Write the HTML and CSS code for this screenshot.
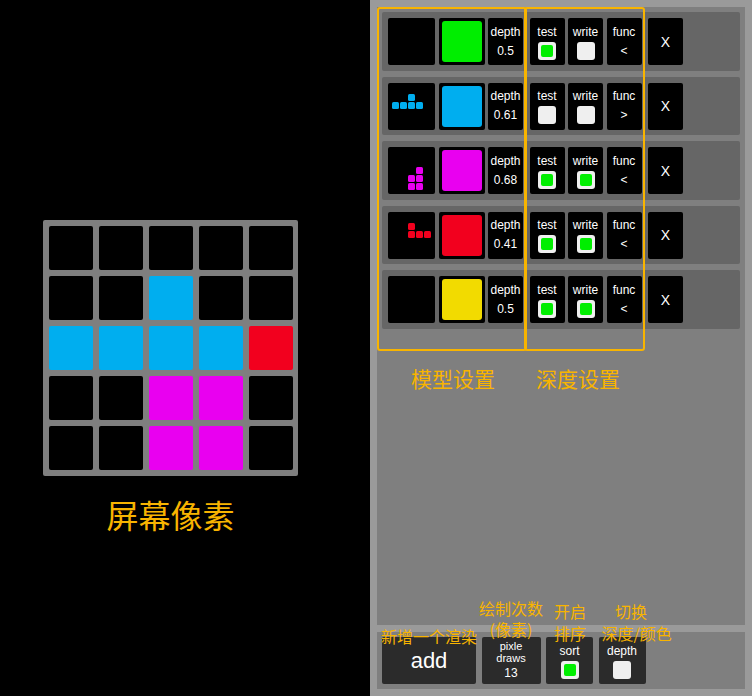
FILE: index.html
```html
<!DOCTYPE html>
<html lang="zh">
<head>
<meta charset="utf-8">
<title>Depth test demo</title>
<link rel="stylesheet" href="styles.css">
</head>
<body>
<div class="page">
  <section class="left">
    <div class="screen">
      <i class="px"></i><i class="px"></i><i class="px"></i><i class="px"></i><i class="px"></i>
      <i class="px"></i><i class="px"></i><i class="px cy"></i><i class="px"></i><i class="px"></i>
      <i class="px cy"></i><i class="px cy"></i><i class="px cy"></i><i class="px cy"></i><i class="px rd"></i>
      <i class="px"></i><i class="px"></i><i class="px mg"></i><i class="px mg"></i><i class="px"></i>
      <i class="px"></i><i class="px"></i><i class="px mg"></i><i class="px mg"></i><i class="px"></i>
    </div>
    <div class="screen-label">屏幕像素</div>
  </section>

  <section class="panel">
    <div class="list">
      <div class="row">
        <div class="cell icon"></div>
        <div class="cell swatch"><div class="fill green"></div></div>
        <div class="cell txt"><span>depth</span><span class="val">0.5</span></div>
        <div class="cell txt sep"><span>test</span><span class="chk on"></span></div>
        <div class="cell txt"><span>write</span><span class="chk"></span></div>
        <div class="cell txt"><span>func</span><span class="val">&lt;</span></div>
        <div class="cell del sep">X</div>
      </div>

      <div class="row">
        <div class="cell icon ic-cy">
          <i></i><i></i><i></i><i></i><i></i>
          <i></i><i></i><i class="on"></i><i></i><i></i>
          <i class="on"></i><i class="on"></i><i class="on"></i><i class="on"></i><i></i>
        </div>
        <div class="cell swatch"><div class="fill cyan"></div></div>
        <div class="cell txt"><span>depth</span><span class="val">0.61</span></div>
        <div class="cell txt sep"><span>test</span><span class="chk"></span></div>
        <div class="cell txt"><span>write</span><span class="chk"></span></div>
        <div class="cell txt"><span>func</span><span class="val">&gt;</span></div>
        <div class="cell del sep">X</div>
      </div>

      <div class="row">
        <div class="cell icon ic-mg">
          <i></i><i></i><i></i><i></i><i></i>
          <i></i><i></i><i></i><i></i><i></i>
          <i></i><i></i><i></i><i class="on"></i><i></i>
          <i></i><i></i><i class="on"></i><i class="on"></i><i></i>
          <i></i><i></i><i class="on"></i><i class="on"></i><i></i>
        </div>
        <div class="cell swatch"><div class="fill magenta"></div></div>
        <div class="cell txt"><span>depth</span><span class="val">0.68</span></div>
        <div class="cell txt sep"><span>test</span><span class="chk on"></span></div>
        <div class="cell txt"><span>write</span><span class="chk on"></span></div>
        <div class="cell txt"><span>func</span><span class="val">&lt;</span></div>
        <div class="cell del sep">X</div>
      </div>

      <div class="row">
        <div class="cell icon ic-rd">
          <i></i><i></i><i></i><i></i><i></i>
          <i></i><i></i><i class="on"></i><i></i><i></i>
          <i></i><i></i><i class="on"></i><i class="on"></i><i class="on"></i>
        </div>
        <div class="cell swatch"><div class="fill red"></div></div>
        <div class="cell txt"><span>depth</span><span class="val">0.41</span></div>
        <div class="cell txt sep"><span>test</span><span class="chk on"></span></div>
        <div class="cell txt"><span>write</span><span class="chk on"></span></div>
        <div class="cell txt"><span>func</span><span class="val">&lt;</span></div>
        <div class="cell del sep">X</div>
      </div>

      <div class="row">
        <div class="cell icon"></div>
        <div class="cell swatch"><div class="fill yellow"></div></div>
        <div class="cell txt"><span>depth</span><span class="val">0.5</span></div>
        <div class="cell txt sep"><span>test</span><span class="chk on"></span></div>
        <div class="cell txt"><span>write</span><span class="chk on"></span></div>
        <div class="cell txt"><span>func</span><span class="val">&lt;</span></div>
        <div class="cell del sep">X</div>
      </div>
    </div>

    <div class="toolbar">
      <div class="tool add">add</div>
      <div class="tool draws"><span>pixle</span><span>draws</span><span class="count">13</span></div>
      <div class="tool txt wide"><span>sort</span><span class="chk on"></span></div>
      <div class="tool txt wide"><span>depth</span><span class="chk"></span></div>
    </div>
  </section>
</div>

<div class="box box-model"></div>
<div class="box box-depth"></div>
<div class="note n-model">模型设置</div>
<div class="note n-depth">深度设置</div>
<div class="note n-add">新增一个渲染</div>
<div class="note n-draws"><div>绘制次数</div><div>(像素)</div></div>
<div class="note n-sort"><div>开启</div><div>排序</div></div>
<div class="note n-switch"><div class="shift">切换</div><div>深度/颜色</div></div>
</body>
</html>
```

FILE: styles.css
```css
* { box-sizing: border-box; margin: 0; padding: 0; }

html, body { background: #000; }

body {
  width: 752px;
  height: 696px;
  overflow: hidden;
  position: relative;
  font-family: "Liberation Sans", Arial, "Noto Sans CJK SC", sans-serif;
  color: #fff;
}

.page { display: flex; height: 696px; }

/* ---------- left: screen pixels ---------- */
.left { width: 370px; padding: 220px 0 0 43px; }

.screen {
  width: 255px;
  height: 256px;
  background: #7f7f7f;
  padding: 5.7px 5.5px 5.5px;
  border-radius: 2px;
  display: grid;
  grid-template-columns: repeat(5, 44px);
  grid-template-rows: repeat(5, 44px);
  gap: 6px;
}
.px { background: #000; border-radius: 2px; }
.px.cy { background: #00aeef; }
.px.rd { background: #f2001e; }
.px.mg { background: #e900f0; }

.screen-label {
  width: 255px;
  margin-top: 22px;
  text-align: center;
  font-family: "Noto Sans CJK SC", sans-serif;
  font-size: 32px;
  line-height: 32px;
  color: #f8b400;
}

/* ---------- right: panel ---------- */
.panel {
  width: 382px;
  height: 696px;
  background: #9a9a9a;
  padding: 7px;
  display: flex;
  flex-direction: column;
  gap: 7px;
}

.list {
  flex: 1;
  background: #7f7f7f;
  padding: 5px;
  display: flex;
  flex-direction: column;
  gap: 6px;
}

.row {
  background: #666;
  border-radius: 2px;
  padding: 6px 6px 5.5px;
  display: flex;
  gap: 3.5px;
}

.cell { background: #000; border-radius: 2px; height: 47px; }
.sep { margin-left: 3px; }

.icon {
  width: 47px;
  padding: 3.5px;
  display: grid;
  grid-template-columns: repeat(5, 7px);
  grid-auto-rows: 7px;
  gap: 1px;
  align-content: start;
}
.icon i { border-radius: 1.5px; }
.ic-cy i.on { background: #00aeef; }
.ic-mg i.on { background: #e900f0; }
.ic-rd i.on { background: #f2001e; }

.swatch { width: 46px; padding: 3px; }
.fill { width: 100%; height: 100%; border-radius: 3px; }
.green { background: #00ee00; }
.cyan { background: #00aeef; }
.magenta { background: #e900f0; }
.red { background: #f2001e; }
.yellow { background: #f2db00; }

.txt {
  width: 35px;
  display: flex;
  flex-direction: column;
  align-items: center;
  padding-top: 6.5px;
  gap: 3px;
  font-size: 12px;
  line-height: 14px;
}
.val { height: 18px; line-height: 18px; }

.chk {
  display: block;
  width: 18px;
  height: 18px;
  background: #efefef;
  border-radius: 3px;
  padding: 3px;
}
.chk.on::after {
  content: "";
  display: block;
  width: 12px;
  height: 12px;
  background: #00ee00;
  border-radius: 2px;
}

.del {
  width: 35px;
  display: flex;
  align-items: center;
  justify-content: center;
  font-size: 14px;
}

/* ---------- toolbar ---------- */
.toolbar {
  height: 57px;
  background: #7f7f7f;
  padding: 5px;
  display: flex;
  gap: 5.5px;
}
.tool { background: #2b2b2b; border-radius: 2px; height: 47px; }
.tool.wide { width: 47px; }

.add {
  width: 94px;
  display: flex;
  align-items: center;
  justify-content: center;
  font-size: 22px;
}

.draws {
  width: 59px;
  padding-top: 3px;
  display: flex;
  flex-direction: column;
  align-items: center;
  font-size: 11px;
  line-height: 12px;
}
.draws .count { font-size: 12px; line-height: 14px; margin-top: 2px; }

/* ---------- annotations ---------- */
.box {
  position: absolute;
  border: 2.5px solid #f8b400;
  border-radius: 3px;
}
.box-model { left: 377px; top: 7px; width: 150px; height: 344px; }
.box-depth { left: 524px; top: 7px; width: 121px; height: 344px; }

.note {
  position: absolute;
  font-family: "Noto Sans CJK SC", sans-serif;
  color: #f8b400;
  white-space: nowrap;
  font-size: 16px;
}
.n-model { left: 411px; top: 368px; font-size: 21px; line-height: 21px; }
.n-depth { left: 536px; top: 368px; font-size: 21px; line-height: 21px; }
.n-add { left: 381px; top: 628px; line-height: 16px; }
.n-draws { left: 479px; top: 597.5px; width: 64px; text-align: center; line-height: 21px; }
.n-sort { left: 554px; top: 600px; line-height: 22px; }
.n-switch { left: 601.5px; top: 600px; width: 70px; text-align: center; line-height: 22px; }
.n-switch .shift { padding-right: 11px; }
```
